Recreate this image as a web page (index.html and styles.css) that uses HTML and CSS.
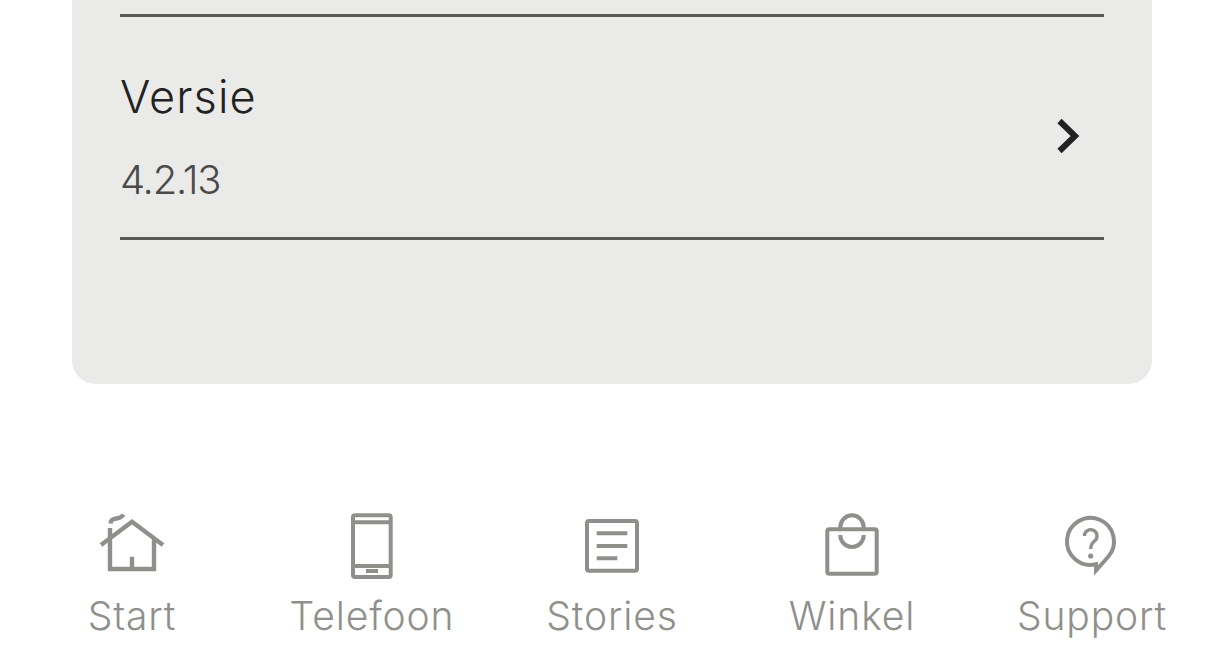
FILE: index.html
```html
<!DOCTYPE html>
<html lang="nl">
<head>
<meta charset="utf-8">
<title>Versie</title>
<link rel="stylesheet" href="styles.css">
</head>
<body>
<div class="page">
  <main class="card">
    <div class="row">
      <div class="row-text">
        <div class="row-title">Versie</div>
        <div class="row-sub">4.2.13</div>
      </div>
      <svg class="chevron" width="24" height="36" viewBox="0 0 24 36"><path d="M2.5 3 L18 18 L2.5 33" fill="none" stroke="#222" stroke-width="6"/></svg>
    </div>
  </main>
  <nav class="nav">
    <a class="nav-item">
      <svg class="nav-icon" viewBox="0 0 72 72"><path class="bold" d="M5 35 L36 11.7 L67 35 M14 18 V59 H58 V28 M36 46.7 V59"/><path class="bold" d="M14.5 13.5 C15 6 24 11 27.5 4.5"/></svg>
      <span class="nav-label">Start</span>
    </a>
    <a class="nav-item">
      <svg class="nav-icon" viewBox="0 0 72 72"><rect x="17" y="5.3" width="37.7" height="61.7" rx="2"/><path d="M17 12.3 H54.7 M17 56 H54.7 M30 61 H42"/></svg>
      <span class="nav-label">Telefoon</span>
    </a>
    <a class="nav-item">
      <svg class="nav-icon" viewBox="0 0 72 72"><rect x="11" y="11" width="50" height="49.7" rx="2"/><path d="M20.7 23.3 H51.3 M20.7 36 H51.3 M20.7 48.3 H41.3"/></svg>
      <span class="nav-label">Stories</span>
    </a>
    <a class="nav-item">
      <svg class="nav-icon" viewBox="0 0 72 72"><rect x="11.3" y="19.3" width="49.4" height="44.4" rx="2"/><path d="M24.3 19 V17.3 A11.7 12 0 0 1 47.7 17.3 V19 M24.3 25 A11.7 12 0 0 0 47.7 25"/></svg>
      <span class="nav-label">Winkel</span>
    </a>
    <a class="nav-item">
      <svg class="nav-icon" viewBox="0 0 72 72"><path d="M40 54.2 A23.5 23.5 0 1 1 52 47 L40 60.5 Z"/><path class="thin" d="M28.4 26 A6.3 6.3 0 1 1 38.5 31 C35.5 33.5 34.7 35 34.7 39"/><circle class="dot" cx="34.7" cy="46" r="2.6"/></svg>
      <span class="nav-label">Support</span>
    </a>
  </nav>
</div>
</body>
</html>
```
FILE: styles.css
```css
* { box-sizing: border-box; }
html, body { margin: 0; padding: 0; background: #fff; }
body { font-family: "Inter", "Liberation Sans", sans-serif; }
.page { width: 1224px; height: 666px; overflow: hidden; display: flex; flex-direction: column; }
.card {
  width: 1080px; height: 384px; margin-left: 72px;
  background: #eaeae8; border-radius: 0 0 24px 24px;
  padding: 14px 48px 0;
}
.row {
  height: 226px;
  border-top: 3px solid #5b5855; border-bottom: 3px solid #5b5855;
  padding: 18px 23px 0 0;
  display: flex; align-items: center; justify-content: space-between;
}
.row-text { display: flex; flex-direction: column; gap: 35px; }
.row-title { font-size: 45px; line-height: 52px; font-weight: 350; color: #222; letter-spacing: 1.1px; }
.row-sub { font-size: 40px; line-height: 44px; font-weight: 350; color: #4a4a4a; letter-spacing: -1.2px; }
.chevron { display: block; }
.nav { display: grid; grid-template-columns: repeat(5, 240px); margin: 126px 0 0 12px; }
.nav-item { display: flex; flex-direction: column; align-items: center; }
.nav-icon { display: block; width: 72px; height: 72px; fill: none; stroke: #8f8f8c; stroke-width: 4; }
.nav-icon .bold { stroke-width: 4.4; }
.nav-icon .thin { stroke-width: 3.4; }
.nav-icon .dot { fill: #8f8f8c; stroke: none; }
.nav-label { margin-top: 10px; font-size: 39px; line-height: 48px; font-weight: 350; letter-spacing: 0.9px; color: #8f8f8c; white-space: nowrap; }
```
